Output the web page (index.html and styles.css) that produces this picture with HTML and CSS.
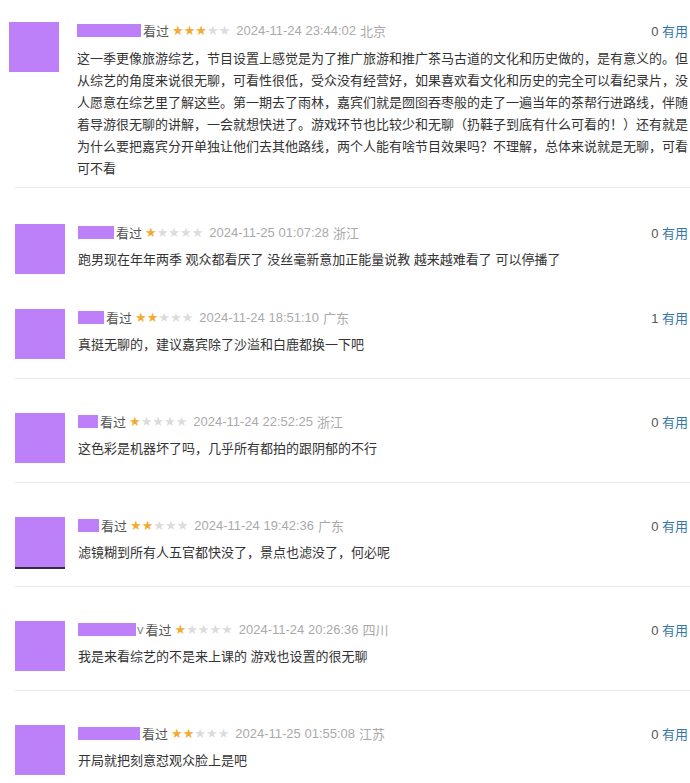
FILE: index.html
```html
<!DOCTYPE html>
<html>
  <head>
    <meta charset=utf-8>
    <title>短评</title>
    <link rel="stylesheet" href="styles.css">
  </head>
  <body>
    <div class="comments">
      <div class="item item-lead">
        <div class="avatar"></div>
        <div class="body">
          <div class="info">
            <span class="name" style="width: 64px"></span>
            <span class="watched">看过</span>
            <span class="stars"><b>★★★</b>★★</span>
            <span class="time">2024-11-24 23:44:02</span>
            <span class="place">北京</span>
            <span class="votes"><em>0</em> <a href="#">有用</a></span>
          </div>
          <p class="short">这一季更像旅游综艺，节目设置上感觉是为了推广旅游和推广茶马古道的文化和历史做的，是有意义的。但从综艺的角度来说很无聊，可看性很低，受众没有经营好，如果喜欢看文化和历史的完全可以看纪录片，没人愿意在综艺里了解这些。第一期去了雨林，嘉宾们就是囫囵吞枣般的走了一遍当年的茶帮行进路线，伴随着导游很无聊的讲解，一会就想快进了。游戏环节也比较少和无聊（扔鞋子到底有什么可看的！）还有就是为什么要把嘉宾分开单独让他们去其他路线，两个人能有啥节目效果吗？不理解，总体来说就是无聊，可看可不看</p>
        </div>
      </div>

      <div class="item item-flush">
        <div class="avatar"></div>
        <div class="body">
          <div class="info">
            <span class="name" style="width: 36px"></span>
            <span class="watched">看过</span>
            <span class="stars"><b>★</b>★★★★</span>
            <span class="time">2024-11-25 01:07:28</span>
            <span class="place">浙江</span>
            <span class="votes"><em>0</em> <a href="#">有用</a></span>
          </div>
          <p class="short">跑男现在年年两季 观众都看厌了 没丝毫新意加正能量说教 越来越难看了 可以停播了</p>
        </div>
      </div>

      <div class="item">
        <div class="avatar"></div>
        <div class="body">
          <div class="info">
            <span class="name" style="width: 26px"></span>
            <span class="watched">看过</span>
            <span class="stars"><b>★★</b>★★★</span>
            <span class="time">2024-11-24 18:51:10</span>
            <span class="place">广东</span>
            <span class="votes"><em>1</em> <a href="#">有用</a></span>
          </div>
          <p class="short">真挺无聊的，建议嘉宾除了沙溢和白鹿都换一下吧</p>
        </div>
      </div>

      <div class="item">
        <div class="avatar"></div>
        <div class="body">
          <div class="info">
            <span class="name" style="width: 20px"></span>
            <span class="watched">看过</span>
            <span class="stars"><b>★</b>★★★★</span>
            <span class="time">2024-11-24 22:52:25</span>
            <span class="place">浙江</span>
            <span class="votes"><em>0</em> <a href="#">有用</a></span>
          </div>
          <p class="short">这色彩是机器坏了吗，几乎所有都拍的跟阴郁的不行</p>
        </div>
      </div>

      <div class="item">
        <div class="avatar avatar-edge"></div>
        <div class="body">
          <div class="info">
            <span class="name" style="width: 21px"></span>
            <span class="watched">看过</span>
            <span class="stars"><b>★★</b>★★★</span>
            <span class="time">2024-11-24 19:42:36</span>
            <span class="place">广东</span>
            <span class="votes"><em>0</em> <a href="#">有用</a></span>
          </div>
          <p class="short">滤镜糊到所有人五官都快没了，景点也滤没了，何必呢</p>
        </div>
      </div>

      <div class="item">
        <div class="avatar"></div>
        <div class="body">
          <div class="info">
            <span class="name" style="width: 58px"></span><span class="tail">v</span>
            <span class="watched">看过</span>
            <span class="stars"><b>★</b>★★★★</span>
            <span class="time">2024-11-24 20:26:36</span>
            <span class="place">四川</span>
            <span class="votes"><em>0</em> <a href="#">有用</a></span>
          </div>
          <p class="short">我是来看综艺的不是来上课的 游戏也设置的很无聊</p>
        </div>
      </div>

      <div class="item">
        <div class="avatar"></div>
        <div class="body">
          <div class="info">
            <span class="name" style="width: 62px"></span>
            <span class="watched">看过</span>
            <span class="stars"><b>★★</b>★★★</span>
            <span class="time">2024-11-25 01:55:08</span>
            <span class="place">江苏</span>
            <span class="votes"><em>0</em> <a href="#">有用</a></span>
          </div>
          <p class="short">开局就把刻意怼观众脸上是吧</p>
        </div>
      </div>
    </div>
  </body>
</html>
```

FILE: styles.css
```css
body {
  margin: 0;
  background: #fff;
  font-family: "Liberation Sans", "Noto Sans CJK SC", sans-serif;
  font-size: 13px;
  color: #333;
}

.comments {
  padding-left: 15px;
}

.item {
  display: flex;
  align-items: flex-start;
  padding: 31px 0 19px;
  border-bottom: 1px solid #eaeaea;
}

.item-lead {
  padding: 19px 0 7px;
}

.item-lead .avatar {
  margin-left: -6px;
  margin-right: 18px;
}

.item-flush {
  padding-top: 33px;
  padding-bottom: 0;
  border-bottom: none;
}

.item-flush + .item {
  padding-top: 32px;
}

.avatar {
  flex: none;
  width: 50px;
  height: 50px;
  margin-top: 3px;
  margin-right: 13px;
  background: #bd80f8;
}

.avatar-edge {
  box-shadow: 0 2px 0 #3a2a40;
}

.body {
  flex: 1;
  min-width: 0;
}

.info {
  display: flex;
  align-items: center;
  height: 22px;
  padding-right: 2px;
  white-space: nowrap;
}

.name {
  display: inline-block;
  height: 13px;
  background: #bd80f8;
}

.tail {
  color: #888;
  margin-left: 1px;
}

.watched {
  color: #555;
  margin-left: 2px;
}

.stars {
  margin-left: 3px;
  font-family: "DejaVu Sans", sans-serif;
  font-size: 13px;
  color: #dcdcdc;
}

.stars b {
  font-weight: normal;
  color: #f4aa2f;
}

.time {
  margin-left: 6px;
  color: #aaa;
}

.place {
  margin-left: 4px;
  color: #aaa;
}

.votes {
  margin-left: auto;
  color: #555;
}

.votes em {
  font-style: normal;
}

.votes a {
  color: #37a;
  text-decoration: none;
}

.short {
  margin: 6px 0 0;
  line-height: 22px;
}

.item-lead .short {
  margin-top: 7px;
}
```
